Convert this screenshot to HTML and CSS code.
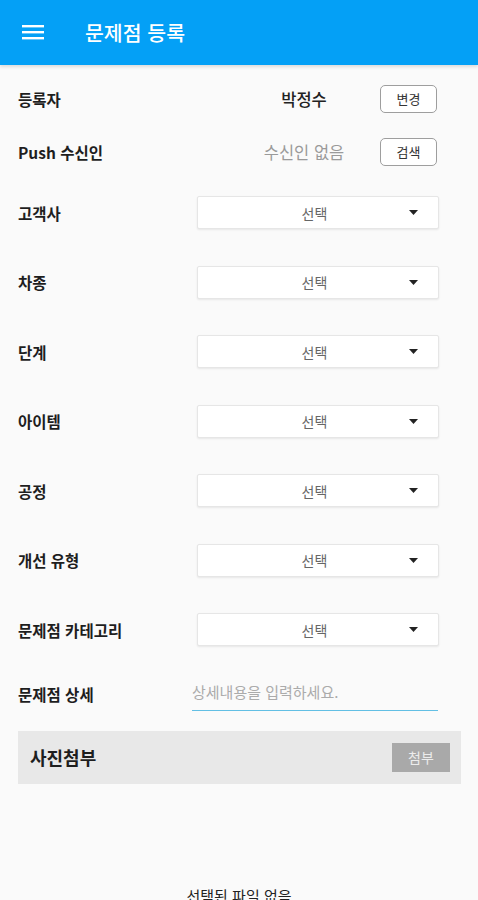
FILE: index.html
```html
<!DOCTYPE html>
<html lang="ko">
<head>
<meta charset="utf-8">
<title>문제점 등록</title>
<link rel="stylesheet" href="styles.css">
</head>
<body>
<header class="appbar">
  <svg class="menu" width="22" height="16" viewBox="0 0 22 16"><rect x="0" y="1" width="22" height="2.4" fill="#fff"/><rect x="0" y="7" width="22" height="2.4" fill="#fff"/><rect x="0" y="13" width="22" height="2.4" fill="#fff"/></svg>
  <h1 class="title">문제점 등록</h1>
</header>
<main class="form">
  <div class="info-row">
    <span class="label">등록자</span>
    <span class="value">박정수</span>
    <button class="outline-btn">변경</button>
  </div>
  <div class="info-row">
    <span class="label">Push 수신인</span>
    <span class="value muted">수신인 없음</span>
    <button class="outline-btn">검색</button>
  </div>
  <div class="select-row"><span class="label">고객사</span><div class="select"><span class="select-text">선택</span><svg class="caret" width="9" height="5" viewBox="0 0 9 5"><path d="M0 0h9L4.5 5z" fill="#222"/></svg></div></div>
  <div class="select-row"><span class="label">차종</span><div class="select"><span class="select-text">선택</span><svg class="caret" width="9" height="5" viewBox="0 0 9 5"><path d="M0 0h9L4.5 5z" fill="#222"/></svg></div></div>
  <div class="select-row"><span class="label">단계</span><div class="select"><span class="select-text">선택</span><svg class="caret" width="9" height="5" viewBox="0 0 9 5"><path d="M0 0h9L4.5 5z" fill="#222"/></svg></div></div>
  <div class="select-row"><span class="label">아이템</span><div class="select"><span class="select-text">선택</span><svg class="caret" width="9" height="5" viewBox="0 0 9 5"><path d="M0 0h9L4.5 5z" fill="#222"/></svg></div></div>
  <div class="select-row"><span class="label">공정</span><div class="select"><span class="select-text">선택</span><svg class="caret" width="9" height="5" viewBox="0 0 9 5"><path d="M0 0h9L4.5 5z" fill="#222"/></svg></div></div>
  <div class="select-row"><span class="label">개선 유형</span><div class="select"><span class="select-text">선택</span><svg class="caret" width="9" height="5" viewBox="0 0 9 5"><path d="M0 0h9L4.5 5z" fill="#222"/></svg></div></div>
  <div class="select-row"><span class="label">문제점 카테고리</span><div class="select"><span class="select-text">선택</span><svg class="caret" width="9" height="5" viewBox="0 0 9 5"><path d="M0 0h9L4.5 5z" fill="#222"/></svg></div></div>
  <div class="detail-row">
    <span class="label narrow">문제점 상세</span>
    <div class="detail-input">상세내용을 입력하세요.</div>
  </div>
  <section class="photo-panel">
    <span class="photo-title">사진첨부</span>
    <button class="attach-btn">첨부</button>
  </section>
  <p class="no-file">선택된 파일 없음</p>
</main>
</body>
</html>
```

FILE: styles.css
```css
* { box-sizing: border-box; }
html, body { margin: 0; padding: 0; }
body {
  background: #fafafa;
  font-family: "Noto Sans CJK KR", "Noto Sans", sans-serif;
  color: #222;
  width: 478px;
  height: 900px;
  overflow: hidden;
}
.appbar {
  height: 65px;
  background: #04a0f6;
  display: flex;
  align-items: center;
  padding-left: 22px;
  box-shadow: 0 2px 3px rgba(0,0,0,0.12);
}
.menu { display: block; margin-top: -1px; }
.title {
  margin: 0 0 0 41px;
  font-size: 20.5px;
  font-weight: 500;
  color: #fff;
  line-height: 1;
}
.form {
  padding: 7px 39px 0 18px;
}
.label {
  font-size: 15.5px;
  font-weight: 700;
  color: #1e1e1e;
}
.info-row {
  height: 53px;
  display: flex;
  align-items: center;
}
.info-row .label { flex: 1; }
.value {
  width: 130px;
  text-align: center;
  font-size: 16.5px;
  font-weight: 500;
  color: #222;
}
.value.muted { color: #9a9a9a; font-weight: 400; }
.outline-btn {
  margin-left: 11px;
  margin-right: 2px;
  width: 57px;
  height: 28px;
  border: 1px solid #9e9e9e;
  border-radius: 5px;
  background: #fff;
  font-family: inherit;
  font-size: 13px;
  color: #333;
  padding: 0;
}
.select-row {
  height: 69.5px;
  display: flex;
  align-items: center;
}
.select-row .label { width: 179px; flex: none; }
.select {
  flex: 1;
  height: 33px;
  background: #fff;
  border: 1px solid #e6e6e6;
  border-radius: 2px;
  box-shadow: 0 1px 2px rgba(0,0,0,0.08);
  display: flex;
  align-items: center;
  padding-left: 22px;
}
.select-text {
  flex: 1;
  text-align: center;
  font-size: 14px;
  color: #666;
}
.caret { display: block; margin-right: 20px; }
.detail-row {
  height: 59px;
  display: flex;
  align-items: center;
}
.label.narrow { width: 174px; flex: none; }
.detail-input {
  flex: 1;
  margin-right: 1px;
  height: 30px;
  margin-top: 4px;
  border-bottom: 1.5px solid #62bfe4;
  font-size: 15px;
  color: #ababab;
  line-height: 22px;
}
.photo-panel {
  margin: 7px -22px 0 0;
  height: 53px;
  background: #e8e8e8;
  display: flex;
  align-items: center;
  justify-content: space-between;
  padding: 0 11px 0 12px;
}
.photo-title {
  font-size: 18px;
  font-weight: 700;
  color: #1e1e1e;
}
.attach-btn {
  width: 58px;
  height: 29px;
  border: none;
  background: #a9a9a9;
  color: #ececec;
  font-family: inherit;
  font-size: 14px;
  padding: 0;
}
.no-file {
  margin: 101px -21px 0 0;
  text-align: center;
  font-size: 15px;
  color: #222;
}
```
